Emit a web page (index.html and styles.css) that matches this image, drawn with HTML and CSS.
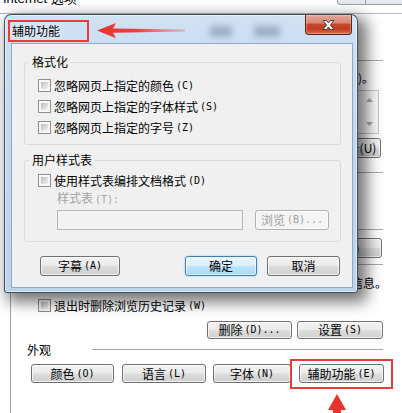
FILE: index.html
```html
<!DOCTYPE html>
<html lang="zh-CN">
<head>
<meta charset="utf-8">
<title>辅助功能</title>
<link rel="stylesheet" href="styles.css">
</head>
<body>
<div class="screen">
  <div class="bgwin">
    <div class="bgtop">
      <span class="bgtitle">Internet 选项</span>
      <span class="cap help"></span>
      <span class="cap xbtn"></span>
    </div>
    <div class="page">
      <div class="sec s-home"><span class="sl"></span><i class="ln"></i></div>
      <div class="ptxt t-home"><span>(R)。</span></div>
      <div class="list">
        <div class="lv"></div>
        <div class="sb">
          <svg width="7" height="4" viewBox="0 0 7 4"><path d="M0 4L3.5 0L7 4Z" fill="#a8a8a8"/></svg>
          <svg width="7" height="4" viewBox="0 0 7 4"><path d="M0 0L3.5 4L7 0Z" fill="#a8a8a8"/></svg>
        </div>
      </div>
      <div class="prow r-home">
        <span class="btn pb-home"></span>
        <span class="btn pb-home"></span>
        <span class="btn pb-new">使用新选项卡(U)</span>
      </div>
      <div class="sec s-start"><span class="sl"></span><i class="ln"></i></div>
      <div class="rad"></div>
      <div class="rad"></div>
      <div class="sec s-tabs"><span class="sl"></span><i class="ln"></i></div>
      <div class="prow r-tabs"><span class="btn pb-tabs">选项卡(T)</span></div>
      <div class="sec s-hist"><span class="sl"></span><i class="ln"></i></div>
      <div class="ptxt t-hist"><span>网页表单信息。</span></div>
      <div class="pcb"><span class="box"></span>退出时删除浏览历史记录<span class="k">(W)</span></div>
      <div class="prow r-hist"><span class="btn pb-del">删除<span class="k">(D)...</span></span><span class="btn pb-set">设置<span class="k">(S)</span></span></div>
      <div class="sec s-look"><span class="sl">外观</span><i class="ln"></i></div>
      <div class="prow r-look">
        <span class="btn lb-color">颜色<span class="k">(O)</span></span>
        <span class="btn lb-lang">语言<span class="k">(L)</span></span>
        <span class="btn lb-font">字体<span class="k">(N)</span></span>
        <span class="btn lb-acc">辅助功能<span class="k">(E)</span></span>
      </div>
    </div>
  </div>

  <div class="dlg">
    <div class="dtitle">
      <span class="dcap">辅助功能</span>
      <span class="ghost g1"></span>
      <span class="ghost g2"></span>
      <span class="dclose">
        <svg width="13" height="10" viewBox="0 0 13 10"><path d="M1 0.5H4.5L6.5 3L8.5 0.5H12L8.3 5L12 9.5H8.5L6.5 7L4.5 9.5H1L4.7 5Z" fill="#fff" stroke="#3b3b3b" stroke-width="0.9" stroke-linejoin="round"/></svg>
      </span>
    </div>
    <div class="client">
      <fieldset class="gb gb1">
        <legend>格式化</legend>
        <div class="cb"><span class="box"></span>忽略网页上指定的颜色<span class="k">(C)</span></div>
        <div class="cb"><span class="box"></span>忽略网页上指定的字体样式<span class="k">(S)</span></div>
        <div class="cb"><span class="box"></span>忽略网页上指定的字号<span class="k">(Z)</span></div>
      </fieldset>
      <fieldset class="gb gb2">
        <legend>用户样式表</legend>
        <div class="cb cb-sheet"><span class="box"></span>使用样式表编排文档格式<span class="k">(D)</span></div>
        <div class="dislbl">样式表<span class="k">(T):</span></div>
        <div class="pathrow">
          <span class="edit"></span>
          <span class="btn btn-dis">浏览<span class="k">(B)...</span></span>
        </div>
      </fieldset>
      <div class="drow">
        <span class="btn b-cap">字幕<span class="k">(A)</span></span>
        <span class="btn b-ok">确定</span>
        <span class="btn b-cancel">取消</span>
      </div>
    </div>
  </div>

  <div class="mark m-title"></div>
  <svg class="arrow a-left" width="92" height="20" viewBox="0 0 92 20">
    <defs>
      <linearGradient id="fadeL" x1="0" y1="0" x2="1" y2="0">
        <stop offset="0" stop-color="#e8332c"/>
        <stop offset="0.45" stop-color="#ea3a33" stop-opacity="0.95"/>
        <stop offset="1" stop-color="#ee5a55" stop-opacity="0.35"/>
      </linearGradient>
    </defs>
    <path d="M2 9.5L21 2L18 7.4L90 8.6V10.6L18 11.8L21 17.2Z" fill="url(#fadeL)"/>
  </svg>
  <div class="mark m-btn"></div>
  <svg class="arrow a-up" width="22" height="21" viewBox="0 0 22 21">
    <path d="M11 1L20 17H15V21H7V17H2Z" fill="#e8332c"/>
  </svg>
</div>
</body>
</html>
```

FILE: styles.css
```css
* { box-sizing: border-box; }
html, body { margin: 0; padding: 0; }
body {
  width: 402px;
  height: 413px;
  overflow: hidden;
  background: #fff;
  font-family: "Noto Sans CJK SC", "Liberation Sans", sans-serif;
  font-size: 12px;
  color: #000;
}
.screen { position: relative; width: 402px; height: 413px; overflow: hidden; }

.k { font-family: "DejaVu Sans Mono", "Liberation Mono", monospace; font-size: 10px; margin-left: 2px; }

/* ---------- background window ---------- */
.bgwin { height: 413px; }
.bgtop {
  display: flex;
  align-items: flex-start;
  height: 14px;
  border-bottom: 1px solid #b9b9b9;
}
.bgtitle {
  margin-top: -10px;
  padding-left: 3px;
  font: 13px/18px "Liberation Sans", "Noto Sans CJK SC", sans-serif;
  white-space: nowrap;
}
.cap { height: 20px; margin-top: -15px; border: 1px solid #9aa3ad; border-top: 0; background: linear-gradient(#f4f6f9, #e3e7ec); }
.help { margin-left: auto; width: 29px; border-radius: 0 0 0 4px; }
.xbtn { width: 44px; margin-right: -8px; border-left: 0; }

.page {
  margin-left: 10px;
  border-left: 1px solid #a3a3a3;
  height: 399px;
  padding: 39px 19px 0 16px;
}
.sec { display: flex; align-items: center; height: 15px; }
.sl { width: 65px; flex: none; line-height: 15px; }
.ln { flex: 1; height: 1px; background: #a9a9a9; }
.ptxt { display: flex; justify-content: flex-end; white-space: nowrap; height: 16px; line-height: 16px; }
.t-home { margin-top: 2px; padding-right: 9px; }
.list {
  margin-top: 4px;
  width: 352px;
  height: 44px;
  border: 1px solid #c5c5c5;
  display: flex;
}
.lv { flex: 1; }
.sb {
  width: 17px;
  display: flex;
  flex-direction: column;
  align-items: center;
  justify-content: space-between;
  padding: 7px 0 7px;
  background: #fafafa;
}
.sb svg { display: block; }
.prow { display: flex; }
.r-home { margin-top: 4px; justify-content: flex-end; gap: 6px; padding-right: 2px; }
.pb-home { width: 92px; }
.pb-new { width: 98px; }
.s-start { margin-top: 7px; }
.rad { height: 18px; }
.s-tabs { margin-top: 6px; }
.r-tabs { margin-top: 1px; justify-content: flex-end; align-items: center; height: 20px; }
.pb-tabs { width: 96px; margin-right: 1px; }
.s-hist { margin-top: -1px; }
.t-hist { margin-top: 3px; }
.t-hist span { margin-right: -4px; }
.pcb { margin-top: 6px; display: flex; align-items: center; height: 16px; padding-left: 11px; white-space: nowrap; }
.pcb .box { margin-right: 3px; }
.r-hist { margin-top: 8px; justify-content: flex-end; gap: 5px; }
.r-hist .btn { height: 18px; }
.pb-del { width: 85px; }
.pb-set { width: 86px; }
.s-look { margin-top: 3px; }
.r-look { margin-top: 7px; padding-left: 4px; }
.r-look .btn { height: 19px; }
.lb-color { width: 83px; }
.lb-lang { width: 84px; margin-left: 8px; }
.lb-font { width: 78px; margin-left: 7px; }
.lb-acc { width: 85px; margin-left: 8px; }

/* ---------- buttons & checkboxes ---------- */
.btn {
  display: flex;
  align-items: center;
  justify-content: center;
  height: 20px;
  border: 1px solid #707070;
  border-radius: 3px;
  background: linear-gradient(#f2f2f2 0%, #ebebeb 48%, #dddddd 52%, #cfcfcf 100%);
  box-shadow: inset 0 0 0 1px rgba(255,255,255,.7);
  line-height: 14px;
  white-space: nowrap;
  flex: none;
}
.box {
  display: inline-block;
  flex: none;
  width: 13px;
  height: 13px;
  border: 1px solid #8e8f8f;
  padding: 2px;
  background: linear-gradient(135deg, #b8bcc2, #f3f3f3) content-box, #f7f7f7;
}

/* ---------- dialog ---------- */
.dlg {
  position: absolute;
  left: 4px;
  top: 14px;
  width: 354px;
  height: 279px;
  border: 1px solid rgba(38, 50, 68, .85);
  border-radius: 7px 7px 3px 3px;
  padding: 0 4px 4px 6px;
  background: linear-gradient(180deg, #d0e1f3 0%, #c3d8ef 35%, #bcd3ec 100%);
  box-shadow: inset 0 0 0 1px rgba(255,255,255,.55), 6px 6px 15px 3px rgba(0,0,0,.55);
}
.dtitle { display: flex; align-items: flex-start; height: 28px; padding-left: 1px; }
.dcap { margin-top: 8px; line-height: 16px; text-shadow: 0 0 6px #eef5fc, 0 0 10px #eef5fc; }
.ghost { margin-top: 11px; height: 11px; background: rgba(70, 82, 104, .35); filter: blur(3px); }
.g1 { width: 22px; margin-left: 150px; }
.g2 { width: 26px; margin-left: 22px; }
.dclose {
  margin-left: auto;
  margin-right: 1px;
  width: 47px;
  height: 20px;
  display: flex;
  align-items: center;
  justify-content: center;
  border: 1px solid #5e2318;
  border-top: 0;
  border-radius: 0 0 4px 4px;
  background: linear-gradient(180deg, #e7a596 0%, #d88a78 40%, #c4472c 50%, #c13d22 75%, #d9734f 100%);
  box-shadow: inset 0 0 0 1px rgba(255,220,210,.35);
}
.dclose svg { display: block; }

.client {
  height: 245px;
  border: 1px solid #93a9c3;
  background: #f0f0f0;
  padding-top: 10px;
}
.gb {
  margin: 0 0 0 12px;
  width: 317px;
  min-width: 0;
  border: 1px solid #d5dbe0;
  border-radius: 3px;
  padding: 5px 0 6px 0;
}
.gb legend { margin-left: 4px; padding: 0 3px; height: 16px; line-height: 16px; }
.gb2 { margin-top: 7px; padding: 3px 0 11px 0; }
.cb { display: flex; align-items: center; height: 21px; padding-left: 13px; white-space: nowrap; }
.cb .box { margin-right: 3px; }
.cb-sheet { height: 19px; }
.dislbl { height: 15px; line-height: 15px; padding-left: 32px; color: #a3a3a3; }
.pathrow { display: flex; margin-top: 5px; padding-left: 32px; }
.edit { width: 186px; height: 20px; border: 1px solid #b8b8b8; background: #f2f2f2; }
.btn-dis {
  width: 74px;
  margin-left: 12px;
  height: 20px;
  border-color: #adb2b5;
  background: #f4f4f4;
  color: #a0a0a0;
}
.drow { display: flex; margin-top: 14px; padding-left: 28px; }
.b-cap { width: 80px; }
.b-ok {
  width: 72px;
  margin-left: 65px;
  border-color: #3c7fb1;
  background: linear-gradient(#eaf6fd 0%, #d9f0fc 48%, #bee6fd 52%, #a7d9f5 100%);
  box-shadow: inset 0 0 0 1px rgba(255,255,255,.6), 0 0 2px #7fc4ef;
}
.b-cancel { width: 73px; margin-left: 10px; }

/* ---------- annotations ---------- */
.mark { position: absolute; border: 2px solid #e83c3a; }
.m-title { left: 8px; top: 20px; width: 81px; height: 22px; }
.m-btn { left: 290px; top: 359px; width: 103px; height: 30px; }
.arrow { position: absolute; display: block; }
.a-left { left: 95px; top: 21px; }
.a-up { left: 326px; top: 393px; }
```
